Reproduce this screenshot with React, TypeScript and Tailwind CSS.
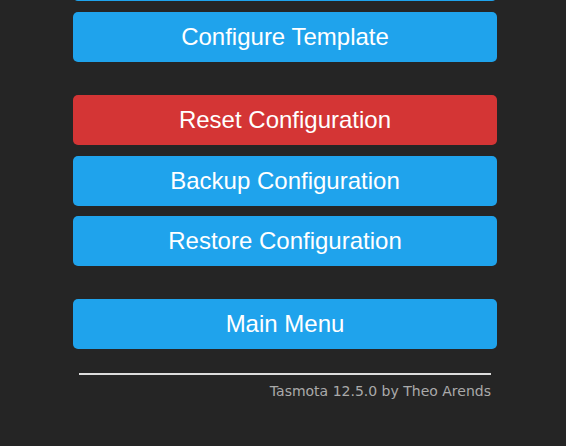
export default function App() {
  const btn =
    "h-[50px] w-full rounded-[5px] text-white text-[24px] leading-[50px] text-center";
  return (
    <main className="min-h-[446px] h-[446px] overflow-hidden bg-[#252525] font-['Liberation_Sans',Arial,sans-serif]">
      <div className="ml-[73px] w-[424px] flex flex-col">
        <button className={`${btn} -mt-[49px] bg-[#1fa3ec]`}>Configuration</button>
        <button className={`${btn} mt-[10.5px] bg-[#1fa3ec]`}>Configure Template</button>

        <button className={`${btn} mt-[33.5px] bg-[#d43535]`}>Reset Configuration</button>
        <button className={`${btn} mt-[10.5px] bg-[#1fa3ec]`}>Backup Configuration</button>
        <button className={`${btn} mt-[10.5px] bg-[#1fa3ec]`}>Restore Configuration</button>

        <button className={`${btn} mt-[32.5px] bg-[#1fa3ec]`}>Main Menu</button>

        <div className="mx-[6px] mt-[24px] text-right">
          <hr className="border-0 h-[2px] bg-[#dddddd]" />
          <p className="mt-[7px] text-[14px] leading-[18px] text-[#aaaaaa] font-['DejaVu_Sans',Verdana,sans-serif]">
            Tasmota 12.5.0 by Theo Arends
          </p>
        </div>
      </div>
    </main>
  );
}
